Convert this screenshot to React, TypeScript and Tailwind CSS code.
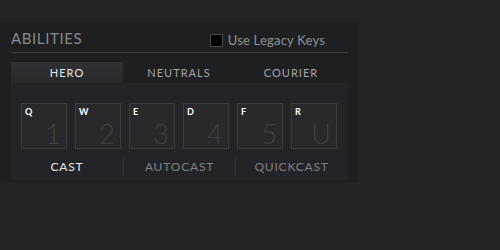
import React from "react";

const keys = [
  { k: "Q", n: "1" },
  { k: "W", n: "2" },
  { k: "E", n: "3" },
  { k: "D", n: "4" },
  { k: "F", n: "5" },
  { k: "R", n: "U" },
];

export default function App() {
  return (
    <div className="w-[500px] h-[250px] bg-[#232426] pt-[22px]" style={{ fontFamily: "Lato, 'Open Sans', sans-serif" }}>
      <div className="w-[359px] h-[160px] bg-[#1e1f21] px-[11px] flex flex-col">
        <div className="flex items-center justify-between h-[31px] pt-[3px] border-b border-[#3a3b3f] pr-[23px]">
          <span className="text-[15px] tracking-[0.6px] text-[#878a8e] leading-none">ABILITIES</span>
          <div className="flex items-center gap-[5px] pt-[4px]">
            <div className="w-[13px] h-[13px] bg-black border border-[#4a4b4e]" />
            <span className="text-[13px] tracking-[0.2px] text-[#909294] leading-none">Use Legacy Keys</span>
          </div>
        </div>
        <div className="flex mt-[9px] h-[21px] text-[11px] tracking-[1px] leading-none">
          <div className="w-[112px] flex items-center justify-center bg-gradient-to-b from-[#303134] to-[#28292b] text-[#e8e8e8]">HERO</div>
          <div className="w-[112px] flex items-center justify-center text-[#a3a4a6]">NEUTRALS</div>
          <div className="w-[112px] flex items-center justify-center text-[#a3a4a6]">COURIER</div>
        </div>
        <div className="flex-1 bg-[#232427] mb-[2px] flex flex-col">
          <div className="flex gap-[8px] pl-[10px] pt-[20px]">
            {keys.map((x) => (
              <div key={x.k} className="relative w-[46px] h-[46px] border border-[#3a3d3e] bg-[#27292a]">
                <span className="absolute left-[3px] top-[3px] text-[9px] font-bold text-white leading-none">{x.k}</span>
                <span className="absolute right-[5px] bottom-[1px] text-[27px] font-light text-[#3e4143] leading-none">{x.n}</span>
              </div>
            ))}
          </div>
          <div className="flex mt-[9px] h-[18px] text-[12px] tracking-[0.8px] leading-none items-center">
            <div className="w-[112px] flex items-center justify-center text-[#e6e6e6]">CAST</div>
            <div className="w-px h-[17px] bg-[#35373a]" />
            <div className="w-[111px] flex items-center justify-center text-[#7d8083]">AUTOCAST</div>
            <div className="w-px h-[17px] bg-[#35373a]" />
            <div className="w-[111px] flex items-center justify-center text-[#7d8083]">QUICKCAST</div>
          </div>
        </div>
      </div>
    </div>
  );
}
